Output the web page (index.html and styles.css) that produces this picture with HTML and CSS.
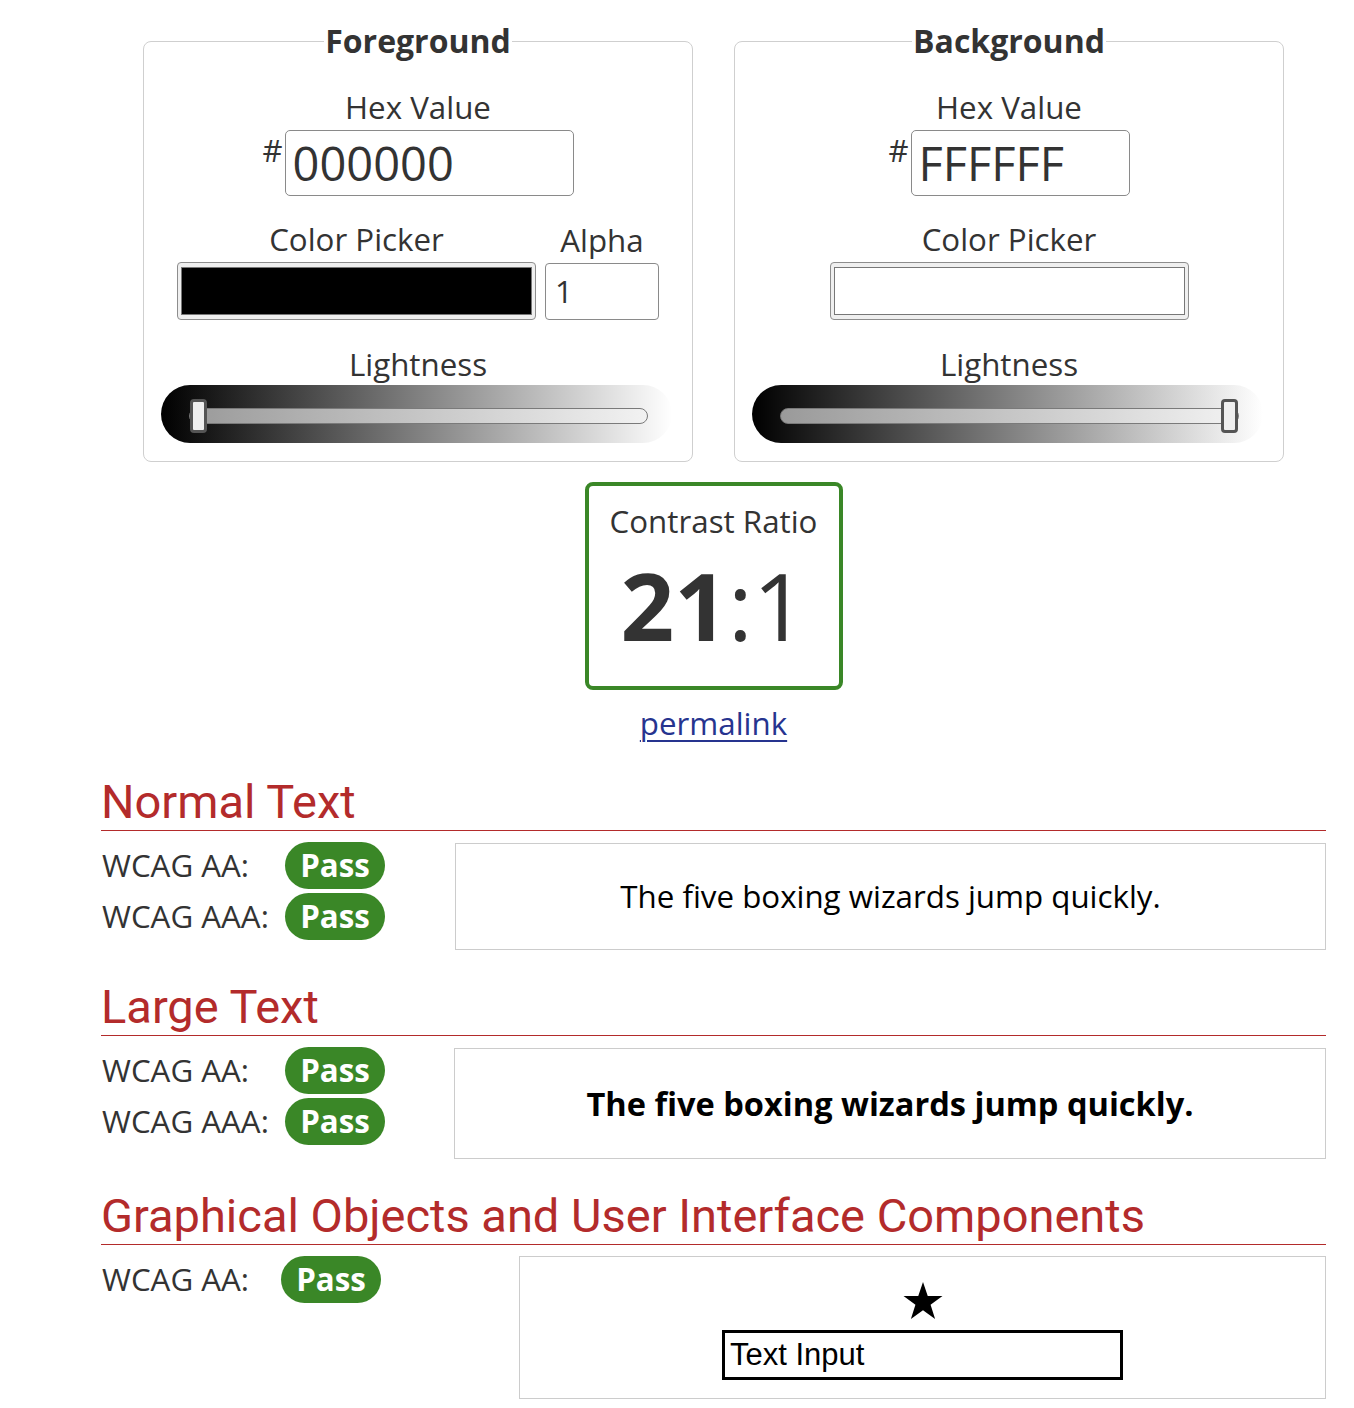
FILE: index.html
```html
<!DOCTYPE html>
<html lang="en">
<head>
<meta charset="utf-8">
<title>Contrast Checker</title>
<link rel="stylesheet" href="styles.css">
</head>
<body>
<main class="page">
  <div class="pickers">
    <fieldset class="picker">
      <legend>Foreground</legend>
      <div class="label">Hex Value</div>
      <div class="hex-row">
        <span class="hash">#</span>
        <div class="hex-input hex-fg">000000</div>
      </div>
      <div class="picker-row">
        <div class="col">
          <div class="label">Color Picker</div>
          <div class="swatch"><div class="swatch-inner swatch-black"></div></div>
        </div>
        <div class="col">
          <div class="label">Alpha</div>
          <div class="alpha-input">1</div>
        </div>
      </div>
      <div class="label lightness-label">Lightness</div>
      <div class="slider">
        <div class="track track-start"><div class="thumb"></div></div>
      </div>
    </fieldset>
    <fieldset class="picker">
      <legend>Background</legend>
      <div class="label">Hex Value</div>
      <div class="hex-row">
        <span class="hash">#</span>
        <div class="hex-input hex-bg">FFFFFF</div>
      </div>
      <div class="picker-row">
        <div class="col">
          <div class="label">Color Picker</div>
          <div class="swatch"><div class="swatch-inner swatch-white"></div></div>
        </div>
      </div>
      <div class="label lightness-label">Lightness</div>
      <div class="slider">
        <div class="track track-end"><div class="thumb"></div></div>
      </div>
    </fieldset>
  </div>

  <div class="ratio-box">
    <div class="ratio-label">Contrast Ratio</div>
    <div class="ratio-value"><b>21</b>:1</div>
  </div>
  <div class="permalink-row"><a href="#" class="permalink">permalink</a></div>

  <section class="section">
    <h2>Normal Text</h2>
    <div class="result">
      <div class="checks">
        <div class="wcag">WCAG AA:</div>
        <div class="badge">Pass</div>
        <div class="wcag">WCAG AAA:</div>
        <div class="badge">Pass</div>
      </div>
      <div class="sample sample-normal">The five boxing wizards jump quickly.</div>
    </div>
  </section>

  <section class="section">
    <h2>Large Text</h2>
    <div class="result">
      <div class="checks">
        <div class="wcag">WCAG AA:</div>
        <div class="badge">Pass</div>
        <div class="wcag">WCAG AAA:</div>
        <div class="badge">Pass</div>
      </div>
      <div class="sample sample-large">The five boxing wizards jump quickly.</div>
    </div>
  </section>

  <section class="section">
    <h2>Graphical Objects and User Interface Components</h2>
    <div class="result">
      <div class="checks checks-ui">
        <div class="wcag">WCAG AA:</div>
        <div class="badge">Pass</div>
      </div>
      <div class="sample sample-ui">
        <svg class="star" width="40" height="38" viewBox="0 0 38 36" aria-hidden="true">
          <polygon points="19,0 23.5,13.3 37.5,13.3 26.2,21.6 30.5,35 19,26.8 7.5,35 11.8,21.6 0.5,13.3 14.5,13.3" fill="#000"/>
        </svg>
        <div class="text-input">Text Input</div>
      </div>
    </div>
  </section>
</main>
</body>
</html>
```

FILE: styles.css
```css
* { box-sizing: border-box; }

body {
  margin: 0;
  background: #fff;
  color: #333;
  font-family: "Open Sans", "DejaVu Sans", sans-serif;
}

.page {
  width: 1225px;
  margin-left: 101px;
  padding-bottom: 10px;
}

/* ---------- pickers ---------- */
.pickers {
  display: flex;
  gap: 41px;
  padding: 0 42px;
  margin-top: 19px;
}

.picker {
  flex: 1;
  margin: 0;
  padding: 0 0 18px;
  border: 1px solid #cfcfcf;
  border-radius: 8px;
  min-width: 0;
}

.picker legend {
  margin: 0 auto;
  padding: 0 1px;
  font-size: 32px;
  line-height: 44px;
  font-weight: 700;
  color: #333;
}

.label {
  font-size: 31.3px;
  line-height: 40px;
  text-align: center;
  margin-top: 24px;
}

.hex-row {
  display: flex;
  justify-content: center;
  align-items: flex-start;
  margin-top: 3px;
}

.hash {
  font-size: 31px;
  line-height: 40px;
  margin-right: 2px;
}

.hex-input {
  height: 66px;
  border: 1px solid #8a8a8a;
  border-radius: 5px;
  font-size: 47px;
  line-height: 64px;
  padding-left: 7px;
  color: #333;
}

.hex-fg { width: 289px; }
.hex-bg { width: 219px; }

.picker-row {
  display: flex;
  justify-content: center;
  align-items: flex-end;
  gap: 9px;
  margin-top: 23px;
}

.col {
  display: flex;
  flex-direction: column;
  align-items: center;
}

.col .label {
  margin-top: 0;
  margin-bottom: 3px;
}

.swatch {
  width: 359px;
  height: 58px;
  display: flex;
  padding: 4px 3px;
  background: #efefef;
  border: 1px solid #8d8d8d;
  border-radius: 4px;
}

.swatch-inner {
  flex: 1;
  border: 1px solid #777;
}

.swatch-black { background: #000; }
.swatch-white { background: #fff; }

.alpha-input {
  width: 114px;
  height: 57px;
  border: 1px solid #8a8a8a;
  border-radius: 4px;
  font-size: 31px;
  line-height: 55px;
  padding-left: 9px;
  color: #333;
}

.lightness-label {
  margin-top: 24px;
}

.slider {
  width: 511px;
  height: 58px;
  margin: 1px 0 0 17px;
  padding: 23px 24px 0 28px;
  border-radius: 29px;
  background: linear-gradient(to right, #000, #fff);
}

.track {
  height: 16px;
  display: flex;
  align-items: center;
  border: 1px solid #7a7a7a;
  border-radius: 8px;
  background: linear-gradient(to right, #9a9a9a, #f2f2f2);
}

.track-start { justify-content: flex-start; }
.track-end { justify-content: flex-end; }

.thumb {
  flex: none;
  width: 17px;
  height: 34px;
  background: #efefef;
  border: 3px solid #555;
  border-radius: 4px;
}

/* ---------- ratio ---------- */
.ratio-box {
  width: 258px;
  height: 208px;
  margin: 20px auto 0;
  border: 4px solid #3a8727;
  border-radius: 8px;
  padding-top: 15px;
  text-align: center;
}

.ratio-label {
  font-size: 31.3px;
  line-height: 40px;
}

.ratio-value {
  margin-top: 14px;
  font-size: 94px;
  line-height: 100px;
  color: #333;
}

.ratio-value b { font-weight: 700; }

.permalink-row {
  margin-top: 13px;
  padding-bottom: 1px;
  text-align: center;
  font-size: 31.3px;
  line-height: 41px;
}

.permalink {
  color: #26348f;
  text-decoration: underline;
  text-decoration-thickness: 2px;
  text-underline-offset: 5px;
}

/* ---------- sections ---------- */
.section { margin-top: 28px; }

.section h2 {
  margin: 0;
  font-family: Roboto, "Liberation Sans", sans-serif;
  font-weight: 400;
  font-size: 47px;
  line-height: 57px;
  color: #b32b2b;
  border-bottom: 1px solid #b32b2b;
}

.result {
  display: flex;
  align-items: flex-start;
  margin-top: 11px;
}

.checks {
  flex: none;
  display: grid;
  grid-template-columns: 184px 100px;
  grid-auto-rows: 47px;
  row-gap: 4px;
}

.checks-ui {
  grid-template-columns: 180px 100px;
}

.wcag {
  font-size: 31.3px;
  line-height: 47px;
  padding-left: 1px;
  color: #333;
}

.badge {
  height: 47px;
  padding: 3px 0;
  border-radius: 24px;
  background: #3a8727;
  color: #fff;
  font-weight: 700;
  font-size: 31.3px;
  line-height: 41px;
  text-align: center;
}

.sample {
  flex: 1;
  margin-left: 70px;
  border: 1px solid #ccc;
  text-align: center;
  color: #000;
}

.sample-normal {
  margin-top: 1px;
  padding: 32px 0;
  font-size: 31.3px;
  line-height: 41px;
}

.sample-large {
  margin-left: 69px;
  margin-top: 1px;
  padding: 32px 0;
  font-size: 32.6px;
  line-height: 45px;
  font-weight: 700;
}

.sample-ui {
  margin-left: 138px;
  height: 143px;
  padding-top: 25px;
  display: flex;
  flex-direction: column;
  align-items: center;
}

.star { display: block; }

.text-input {
  margin-top: 10px;
  width: 401px;
  height: 50px;
  border: 3px solid #000;
  font-family: "Liberation Sans", Arial, sans-serif;
  font-size: 31px;
  line-height: 44px;
  padding-left: 5px;
  text-align: left;
  color: #000;
}
```
